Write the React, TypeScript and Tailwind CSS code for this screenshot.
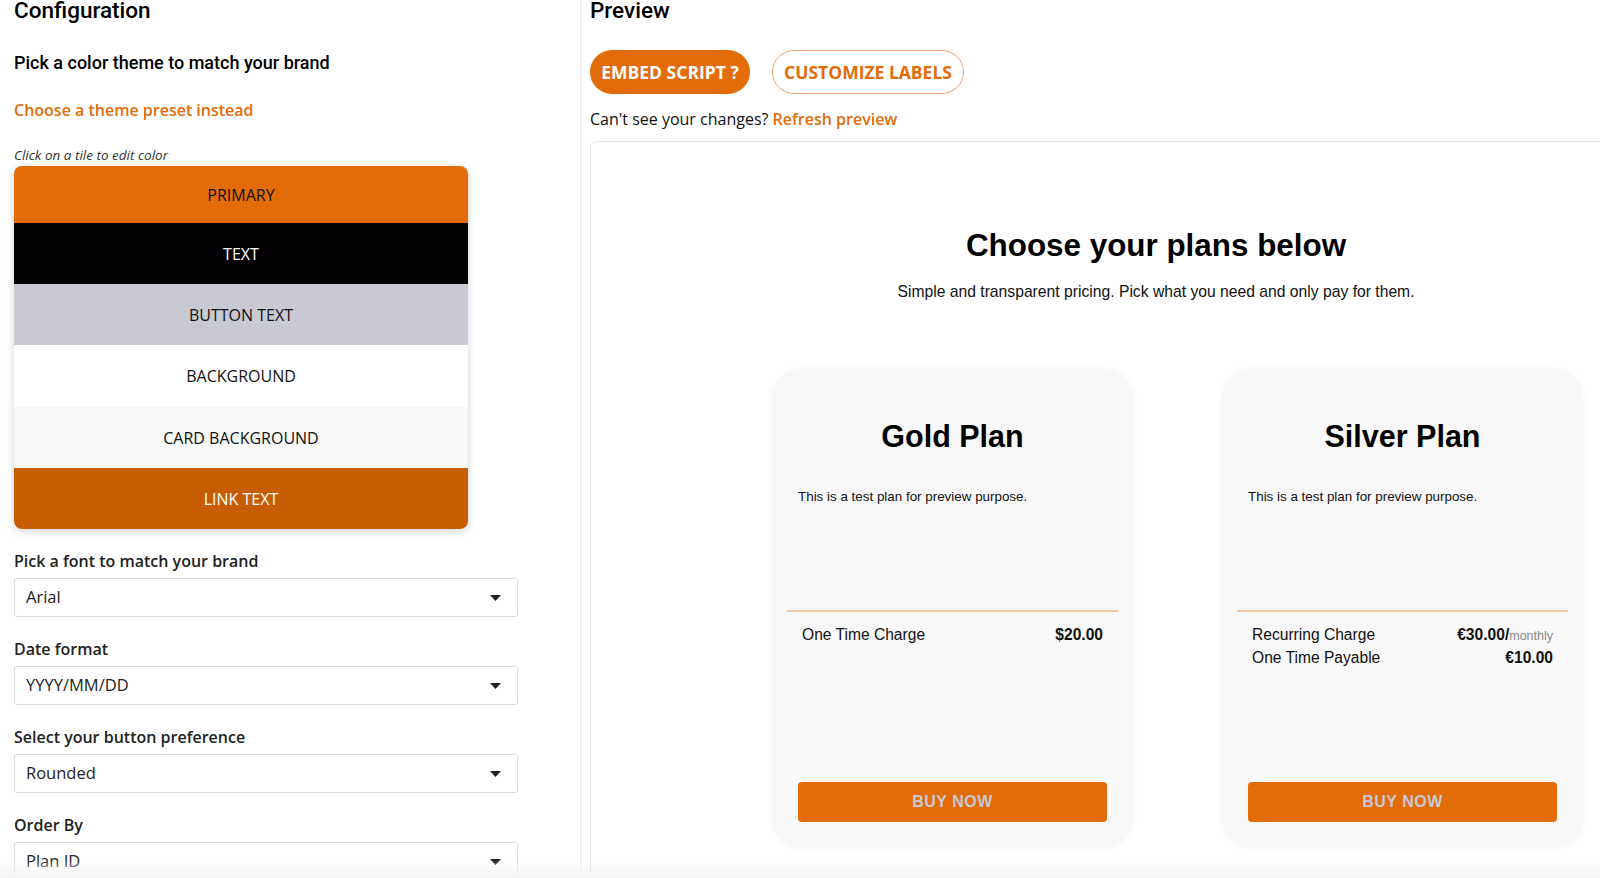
import React from 'react';

const tiles = [
  { label: 'PRIMARY', bg: 'bg-[#e36c09]', text: 'text-[#111]', h: 'h-[57px]' },
  { label: 'TEXT', bg: 'bg-[#030103]', text: 'text-white', h: 'h-[61px]' },
  { label: 'BUTTON TEXT', bg: 'bg-[#c9c9d3]', text: 'text-[#111]', h: 'h-[61px]' },
  { label: 'BACKGROUND', bg: 'bg-white', text: 'text-[#111]', h: 'h-[62px]' },
  { label: 'CARD BACKGROUND', bg: 'bg-[#f8f8f8]', text: 'text-[#111]', h: 'h-[61px]' },
  { label: 'LINK TEXT', bg: 'bg-[#c75d03]', text: 'text-white', h: 'h-[61px]' },
];

function Select({ value }: { value: string }) {
  return (
    <div className="h-[39px] w-[504px] border border-[#dcdcdc] rounded-[3px] bg-white flex items-center justify-between pl-[11px] pr-[16px]">
      <span className="text-[16.5px] text-[#222]">{value}</span>
      <svg width="11" height="6" viewBox="0 0 11 6">
        <path d="M0 0 L11 0 L5.5 6 Z" fill="#222" />
      </svg>
    </div>
  );
}

function Field({ label, value, className }: { label: string; value: string; className?: string }) {
  return (
    <div className={className}>
      <p className="text-[16px] font-semibold text-[#222] leading-[22px] mb-[6px]">{label}</p>
      <Select value={value} />
    </div>
  );
}

function PlanCard({ title, rows }: { title: string; rows: { label: string; price: string; suffix?: string }[] }) {
  return (
    <div className="w-[361px] h-[479px] shrink-0 bg-[#f8f8f8] rounded-[30px] shadow-[0_0_6px_rgba(0,0,0,0.04)] flex flex-col">
      <h3 className="text-[30.5px] font-bold text-black text-center mt-[48px] leading-[38px]">{title}</h3>
      <p className="text-[13.4px] text-[#111] mt-[33px] px-[26px] leading-[18px]">This is a test plan for preview purpose.</p>
      <div className="mx-[15px] mt-[104px] border-t-2 border-[#f2c6a3]" />
      <div className="px-[30px] mt-[12px]">
        {rows.map((r) => (
          <div key={r.label} className="flex justify-between items-baseline text-[15.6px] leading-[22px] text-[#111]">
            <span>{r.label}</span>
            <span className="font-bold">
              {r.price}
              {r.suffix && <span className="font-normal text-[12.5px] text-[#888]">{r.suffix}</span>}
            </span>
          </div>
        ))}
      </div>
      <div className="flex-1" />
      <button className="mx-[26px] mb-[26px] h-[40px] rounded-[4px] bg-[#e36c09] text-[#c9c9d3] text-[16px] font-bold tracking-[0.5px]">
        BUY NOW
      </button>
    </div>
  );
}

export default function App() {
  return (
    <div className="relative w-[1600px] h-[878px] overflow-hidden bg-white font-['Open_Sans',sans-serif] text-[#222]">
      <div className="flex h-full">
        {/* Configuration */}
        <div className="w-[581px] shrink-0 border-r border-[#ececef] pl-[14px]">
          <h1 className="font-['Roboto',sans-serif] font-medium text-[22.5px] leading-[20px] text-black">Configuration</h1>
          <p className="font-['Roboto',sans-serif] font-medium text-[18px] text-black mt-[32px] leading-[22px]">
            Pick a color theme to match your brand
          </p>
          <p className="text-[16px] font-semibold text-[#e36c09] mt-[25px] leading-[22px]">Choose a theme preset instead</p>
          <p className="text-[13.5px] italic text-[#333] mt-[24px] leading-[20px]">Click on a tile to edit color</p>
          <div className="mt-[1px] w-[454px] rounded-[8px] overflow-hidden shadow-[0_2px_8px_rgba(0,0,0,0.18)]">
            {tiles.map((t) => (
              <div key={t.label} className={`${t.h} ${t.bg} ${t.text} flex items-center justify-center text-[16px]`}>
                {t.label}
              </div>
            ))}
          </div>
          <Field label="Pick a font to match your brand" value="Arial" className="mt-[21px]" />
          <Field label="Date format" value="YYYY/MM/DD" className="mt-[21px]" />
          <Field label="Select your button preference" value="Rounded" className="mt-[21px]" />
          <Field label="Order By" value="Plan ID" className="mt-[21px]" />
        </div>

        {/* Preview */}
        <div className="flex-1 pl-[9px]">
          <h2 className="font-['Roboto',sans-serif] font-medium text-[22.5px] leading-[20px] text-black">Preview</h2>
          <div className="flex gap-[22px] mt-[30px]">
            <button className="h-[44px] w-[160px] rounded-full bg-[#e36c09] text-white text-[17.5px] font-bold">
              EMBED SCRIPT ?
            </button>
            <button className="h-[44px] w-[192px] rounded-full border border-[#f0a575] text-[#e36c09] text-[17.5px] font-bold">
              CUSTOMIZE LABELS
            </button>
          </div>
          <p className="text-[16px] mt-[14px] leading-[22px] text-[#111]">
            Can't see your changes? <span className="font-semibold text-[#e36c09]">Refresh preview</span>
          </p>
          <div className="mt-[11px] w-[1132px] h-[800px] border border-[#e4e4e8] rounded-tl-[6px] bg-white font-['Liberation_Sans',Arial,sans-serif]">
            <h2 className="text-[31.4px] font-bold text-black text-center mt-[85px] leading-[38px]">Choose your plans below</h2>
            <p className="text-[15.7px] text-[#111] text-center mt-[17px] leading-[20px]">
              Simple and transparent pricing. Pick what you need and only pay for them.
            </p>
            <div className="flex gap-[89px] pl-[181px] mt-[67px]">
              <PlanCard title="Gold Plan" rows={[{ label: 'One Time Charge', price: '$20.00' }]} />
              <PlanCard
                title="Silver Plan"
                rows={[
                  { label: 'Recurring Charge', price: '€30.00/', suffix: 'monthly' },
                  { label: 'One Time Payable', price: '€10.00' },
                ]}
              />
            </div>
          </div>
        </div>
      </div>
      {/* bottom fade */}
      <div className="absolute left-0 right-0 bottom-0 h-[18px] bg-gradient-to-b from-white/0 to-[#f4f4f4]" />
    </div>
  );
}
